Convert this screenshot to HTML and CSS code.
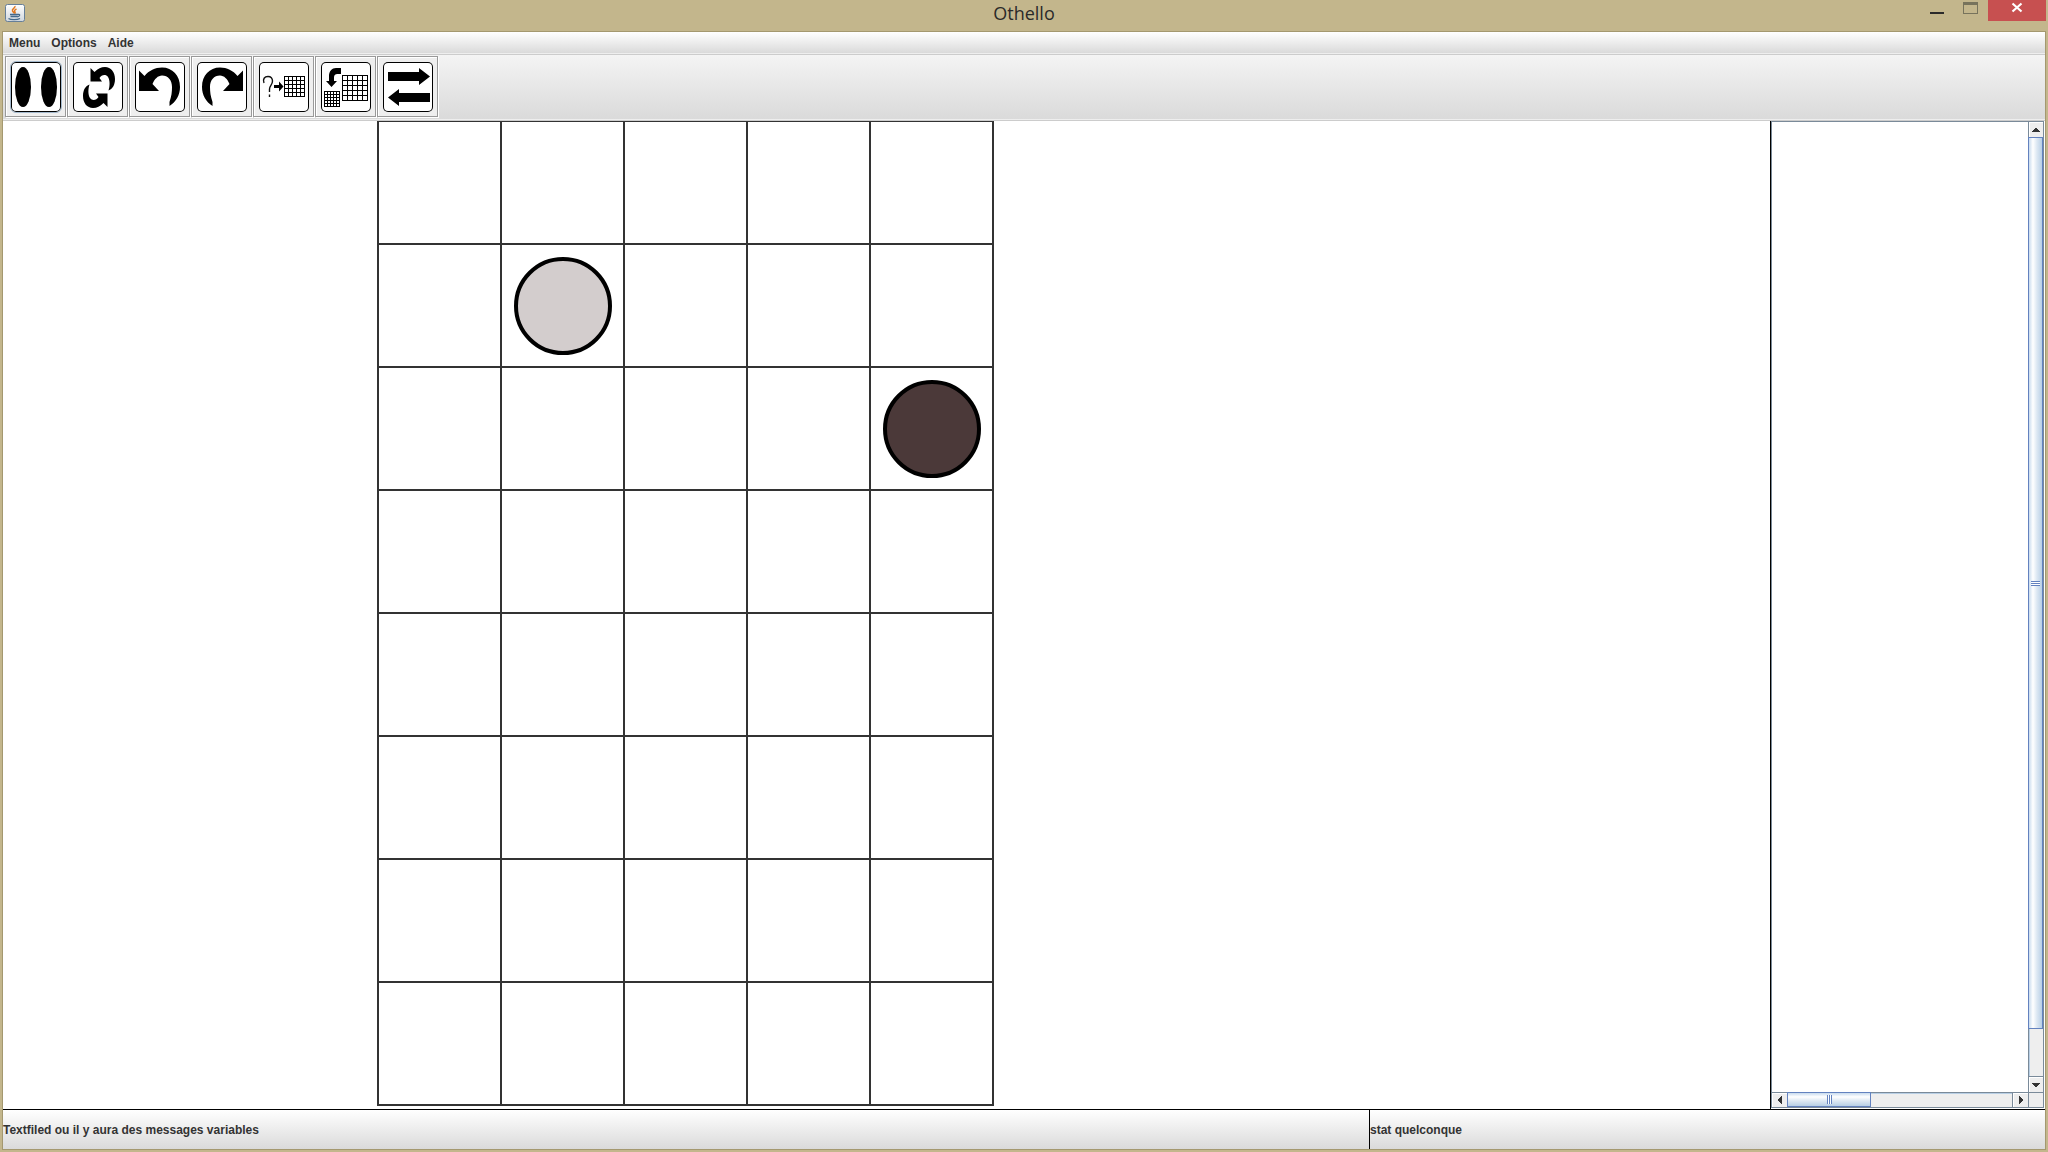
FILE: index.html
```html
<!DOCTYPE html>
<html lang="fr">
<head>
<meta charset="utf-8">
<title>Othello</title>
<link rel="stylesheet" href="styles.css">
</head>
<body>
<div class="window">
  <header class="titlebar">
    <svg class="java" viewBox="0 0 20 18" aria-hidden="true">
      <defs><linearGradient id="tile" x1="0" y1="0" x2="0" y2="1"><stop offset="0" stop-color="#fff"/><stop offset="1" stop-color="#cfd6de"/></linearGradient></defs>
      <rect x=".5" y=".5" width="19" height="17" rx="2" fill="url(#tile)" stroke="#667f98"/>
      <path d="M10 2C10.500 4 6.500 5 7.500 7c.4 1 1.500 1.500 1.500 2.500M11.500 5C9.500 6 9 7 10 8c.6.800 0 1.300-.500 1.700" fill="none" stroke="#e07820" stroke-width="1.500"/>
      <path d="M5 10.500h8M5.500 12.500h7M13 10.500c2.500-.500 2 2-.800 2.300M3.500 14.500c2 1.500 9 1.500 11.500 0" fill="none" stroke="#44698c" stroke-width="1.300"/>
    </svg>
    <h1 class="title">Othello</h1>
    <div class="controls">
      <button class="ctl" aria-label="Réduire"><svg width="14" height="15"><path d="M0 12h14v2H0z" fill="#2a2a2a"/></svg></button>
      <button class="ctl" aria-label="Agrandir" disabled><svg width="15" height="15"><path d="M0 2h15v12H0zM1 5v8h13V5z" fill="#77735c" fill-rule="evenodd"/></svg></button>
      <button class="ctl close" aria-label="Fermer"><svg width="12" height="15"><path d="M1.500 3.500l9 8M10.500 3.500l-9 8" stroke="#fff" stroke-width="2.200"/></svg></button>
    </div>
  </header>
  <div class="client">
    <nav class="menubar">
      <button class="menu">Menu</button>
      <button class="menu">Options</button>
      <button class="menu">Aide</button>
    </nav>
    <div class="toolbar">
      <button class="tool focus" aria-label="Pions"><svg class="icon" viewBox="0 0 50 50"><ellipse cx="12" cy="25" rx="8" ry="20"/><ellipse cx="38" cy="25" rx="8" ry="20"/></svg></button>
      <button class="tool" aria-label="Recommencer"><svg class="icon" viewBox="0 0 50 50"><path d="M17.500 6L21.500 10C25 6.500 28 5 32 5C38 5 42 10 42 17C42 23 39.500 27 35.500 28.500C37 24 37 18 35 15C33 12 28.500 12.500 26.500 16L29 19.500H17.500Z"/><path transform="rotate(180 26 25.500)" d="M17.500 6L21.500 10C25 6.500 28 5 32 5C38 5 42 10 42 17C42 23 39.500 27 35.500 28.500C37 24 37 18 35 15C33 12 28.500 12.500 26.500 16L29 19.500H17.500Z"/></svg></button>
      <button class="tool" aria-label="Annuler"><svg class="icon" viewBox="0 0 50 50"><path d="M4 8.500L9.500 14C14 8.500 20 5.500 27 5.500C37.500 5.500 45 13.500 45 25C45 33 41 40 34.500 44V40C36.500 34 37 30 37 25C37 18 33 13.500 27 13.500C23 13.500 19.500 17 17.500 22L24 29H4Z"/></svg></button>
      <button class="tool" aria-label="Rétablir"><svg class="icon" viewBox="0 0 50 50"><path transform="matrix(-1 0 0 1 50 0)" d="M4 8.500L9.500 14C14 8.500 20 5.500 27 5.500C37.500 5.500 45 13.500 45 25C45 33 41 40 34.500 44V40C36.500 34 37 30 37 25C37 18 33 13.500 27 13.500C23 13.500 19.500 17 17.500 22L24 29H4Z"/></svg></button>
      <button class="tool" aria-label="Suggestion"><svg class="icon" viewBox="0 0 50 50"><path d="M5 21C3.500 17 5.500 14.500 9 14.500C12 14.500 13.500 16 13.500 19C13.500 23 10.500 23.500 10.500 27V30M10.500 32.500V35" fill="none" stroke="#111" stroke-width="1.400"/><path d="M15 23h5v-3.500L24.500 24.500L20 29.500V26H15z"/><path d="M25.500 14v21M29.500 14v21M33.500 14v21M37.500 14v21M41.500 14v21M45.500 14v21M25 14.500h21M25 18.500h21M25 22.500h21M25 26.500h21M25 30.500h21M25 34.500h21" stroke="#000"/></svg></button>
      <button class="tool" aria-label="Taille du plateau"><svg class="icon" viewBox="0 0 50 50"><path d="M20 6v6h-3.500C14 12 13 13 13 16v3h3L10.500 25L5 19h3v-5C8 9 11 6 15 6z"/><path d="M21.500 13v26M26.500 13v26M31.500 13v26M36.500 13v26M41.500 13v26M46.500 13v26M21 13.500h26M21 18.500h26M21 23.500h26M21 28.500h26M21 33.500h26M21 38.500h26M3.500 29v16M6.500 29v16M9.500 29v16M12.500 29v16M15.500 29v16M18.500 29v16M3 29.500h16M3 32.500h16M3 35.500h16M3 38.500h16M3 41.500h16M3 44.500h16" stroke="#000"/></svg></button>
      <button class="tool" aria-label="Échanger"><svg class="icon" viewBox="0 0 50 50"><path d="M5 10h31V6L47 14.500L36 23v-4H5zM47 31H16v-4L5 35.500L16 44v-4h31z"/></svg></button>
    </div>
    <main class="content">
      <section class="play" aria-label="Plateau">
        <div class="board">
          <i></i><i></i><i></i><i></i><i></i>
          <i></i><i><b class="disc light"></b></i><i></i><i></i><i></i>
          <i></i><i></i><i></i><i></i><i><b class="disc dark"></b></i>
          <i></i><i></i><i></i><i></i><i></i>
          <i></i><i></i><i></i><i></i><i></i>
          <i></i><i></i><i></i><i></i><i></i>
          <i></i><i></i><i></i><i></i><i></i>
          <i></i><i></i><i></i><i></i><i></i>
        </div>
      </section>
      <aside class="history">
        <div class="view"></div>
        <div class="scroll vertical">
          <button class="step" aria-label="Haut"><svg width="8" height="4"><path d="M3 0h2v1h1v1h1v1h1v1H0V3h1V2h1V1h1z"/></svg></button>
          <div class="track"><div class="thumb"><span class="grip"></span></div></div>
          <button class="step" aria-label="Bas"><svg width="8" height="4"><path d="M0 0h8v1H7v1H6v1H5v1H3V3H2V2H1V1H0z"/></svg></button>
        </div>
        <div class="scroll horizontal">
          <button class="step" aria-label="Gauche"><svg width="4" height="8"><path d="M4 0v8H3V7H2V6H1V5H0V3h1V2h1V1h1V0z"/></svg></button>
          <div class="track"><div class="thumb"><span class="grip"></span></div></div>
          <button class="step" aria-label="Droite"><svg width="4" height="8"><path d="M0 0v8h1V7h1V6h1V5h1V3H3V2H2V1H1V0z"/></svg></button>
        </div>
        <div class="corner"></div>
      </aside>
    </main>
    <footer class="status">
      <p class="message">Textfiled ou il y aura des messages variables</p>
      <p class="stat">stat quelconque</p>
    </footer>
  </div>
</div>
</body>
</html>
```
FILE: styles.css
```css
* { box-sizing: border-box; }
body {
  margin: 0;
  font: bold 12px/16px "Liberation Sans", Arial, sans-serif;
  color: #333;
}
button {
  margin: 0;
  padding: 0;
  border: 0;
  background: none;
  font: inherit;
  color: inherit;
}
svg { display: block; }

.window {
  display: flex;
  flex-direction: column;
  min-height: 100vh;
  padding: 0 2px 2px;
  background: #c3b68c;
}
.titlebar {
  display: grid;
  grid-template-columns: 1fr auto 1fr;
  height: 31px;
}
.java { width: 20px; height: 18px; margin: 4px 0 0 3px; }
.title {
  margin: 0;
  font: 18px/26px "Open Sans", "Noto Sans", sans-serif;
  color: #2a2a2a;
}
.controls { display: flex; justify-content: flex-end; align-items: flex-start; gap: 19px; }
.ctl { display: flex; justify-content: center; align-items: flex-start; }
.close { width: 58px; height: 21px; margin-left: -9px; background: #c75050; }

.client {
  flex: 1;
  display: flex;
  flex-direction: column;
  border: 1px solid #a4986f;
  background: #fff;
}
.menubar {
  display: flex;
  height: 23px;
  border-bottom: 1px solid #ccc;
  background: linear-gradient(#fff, #dadada 21px, #eee 21px);
}
.menu { height: 22px; padding: 0 5px 0 6px; }

.toolbar {
  display: flex;
  height: 66px;
  padding: 1px 2px;
  border-bottom: 1px solid #ccc;
  background: linear-gradient(#f4f4f4, #dadada 64px, #eee 64px);
}
.tool {
  width: 61px;
  height: 61px;
  margin-right: 1px;
  padding: 4px 3px 3px 4px;
  border: 1px solid #999;
  background: #eee;
  box-shadow: 1px 1px #fff, inset 1px 1px #fff;
}
.icon {
  width: 52px;
  height: 52px;
  border: 1px solid transparent;
  background: linear-gradient(#fff, #fff) padding-box;
  border-radius: 6px;
  box-shadow: inset 0 0 0 1px #000;
}
.focus .icon { outline: 1px solid #a3b8cc; outline-offset: -1px; }

.content { flex: 1; display: flex; }
.play { flex: 1; padding: 0 0 3px 374px; }
.board {
  display: grid;
  grid-template-columns: repeat(5, 121px);
  grid-auto-rows: 121px;
  gap: 2px;
  width: max-content;
  padding: 1px 2px 2px;
  background: #333;
}
.board i { display: grid; place-items: center; padding: 1px 0 0 1px; background: #fff; }
.disc { width: 98px; height: 98px; border: 4px solid #000; border-radius: 50%; }
.light { background: #d3cdcd; }
.dark { background: #4b3939; }

.history {
  display: grid;
  grid-template-columns: 1fr 16px;
  grid-template-rows: 1fr 16px;
  width: 275px;
  padding: 0 1px 1px 0;
  border-left: 1px solid #000;
}
.view { border: 1px solid #7a8a99; border-width: 1px 0 0 1px; }
.scroll { display: flex; background: #eee; }
.vertical { flex-direction: column; border: 1px solid #7a8a99; border-bottom: 0; }
.horizontal { border: 1px solid #7a8a99; border-right: 0; }
.corner { border: 1px solid #7a8a99; background: #eee; }
.step {
  flex: none;
  display: grid;
  place-items: center;
  width: 15px;
  height: 14px;
  background: #eee;
  box-shadow: inset 1px 1px #fff;
  fill: #333;
}
.vertical .step { width: 14px; height: 15px; }
.vertical .step:last-child { border-top: 1px solid #7a8a99; height: 16px; }
.horizontal .step:last-child { border-left: 1px solid #7a8a99; width: 16px; }
.track { flex: 1; display: flex; box-shadow: inset 1px 1px #b8cfe5; }
.thumb { display: grid; place-items: center; border: 1px solid #6382bf; }
.vertical .track { flex-direction: column; }
.vertical .thumb {
  height: 95%;
  margin-left: -1px;
  background: linear-gradient(90deg, #c8dbee, #fff 30%, #dde8f3 60%, #b8cfe5);
}
.horizontal .thumb {
  width: 84px;
  margin-top: -1px;
  background: linear-gradient(#c8dbee, #fff 30%, #dde8f3 60%, #b8cfe5);
}
.grip { width: 9px; height: 5px; background: repeating-linear-gradient(#6382bf 0 1px, #fff 1px 2px); }
.horizontal .grip { width: 5px; height: 9px; background: repeating-linear-gradient(90deg, #6382bf 0 1px, #fff 1px 2px); }

.status {
  display: grid;
  grid-template-columns: 1366fr 676fr;
  height: 40px;
  border-top: 1px solid #000;
  background: linear-gradient(#fff, #dadada);
}
.status p { margin: 0; padding-top: 1px; line-height: 38px; }
.stat { border-left: 1px solid #000; }
```
